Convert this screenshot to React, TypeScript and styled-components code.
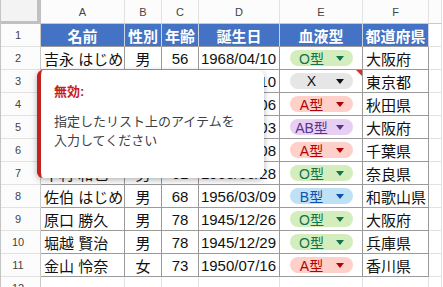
import React from 'react';
import { styled, createGlobalStyle } from 'styled-components';

type Blood = 'O' | 'A' | 'B' | 'AB' | 'X';

interface IRow {
  name: string;
  sex: string;
  age: number;
  birth: string;
  blood: Blood;
  pref: string;
  invalid?: boolean;
}

const GlobalStyle = createGlobalStyle`
  html, body {
    margin: 0;
    padding: 0;
    background: #ffffff;
    overflow: hidden;
  }
  body {
    font-family: "Liberation Sans", "Noto Sans CJK JP", sans-serif;
  }
`;

const CHIP: { [key in Blood]: { bg: string; fg: string; label: string } } = {
  O: { bg: '#d4edbc', fg: '#11734b', label: 'O型' },
  A: { bg: '#ffcfc9', fg: '#b10202', label: 'A型' },
  B: { bg: '#bfe1f6', fg: '#0a53a8', label: 'B型' },
  AB: { bg: '#e6cff2', fg: '#5a3286', label: 'AB型' },
  X: { bg: '#e6e6e6', fg: '#111111', label: 'X' },
};

const COLUMNS = ['A', 'B', 'C', 'D', 'E', 'F', ''];
const HEADERS = ['名前', '性別', '年齢', '誕生日', '血液型', '都道府県'];

const ROWS: IRow[] = [
  { name: '吉永 はじめ', sex: '男', age: 56, birth: '1968/04/10', blood: 'O', pref: '大阪府' },
  { name: '田中 一郎', sex: '男', age: 45, birth: '1979/02/10', blood: 'X', pref: '東京都', invalid: true },
  { name: '佐藤 花子', sex: '女', age: 38, birth: '1986/05/06', blood: 'A', pref: '秋田県' },
  { name: '鈴木 健太', sex: '男', age: 52, birth: '1972/11/03', blood: 'AB', pref: '大阪府' },
  { name: '山本 美咲', sex: '女', age: 29, birth: '1995/09/08', blood: 'A', pref: '千葉県' },
  { name: '中村 和也', sex: '男', age: 61, birth: '1963/06/28', blood: 'O', pref: '奈良県' },
  { name: '佐伯 はじめ', sex: '男', age: 68, birth: '1956/03/09', blood: 'B', pref: '和歌山県' },
  { name: '原口 勝久', sex: '男', age: 78, birth: '1945/12/26', blood: 'O', pref: '大阪府' },
  { name: '堀越 賢治', sex: '男', age: 78, birth: '1945/12/29', blood: 'O', pref: '兵庫県' },
  { name: '金山 怜奈', sex: '女', age: 73, birth: '1950/07/16', blood: 'A', pref: '香川県' },
];

const Page = styled.div`
  position: relative;
  width: 443px;
  height: 287px;
  overflow: hidden;
`;

const Sheet = styled.div`
  display: grid;
  grid-template-columns: 40px 84px 37px 37px 81px 83px 66px 13px;
  grid-template-rows: 24px;
  grid-auto-rows: 23px;
  border-left: 1px solid #c4c4c4;
  width: max-content;
`;

const Cell = styled.div<{ $data?: boolean }>`
  box-sizing: border-box;
  border-right: 1px solid ${(p) => (p.$data ? '#9b9b9b' : '#e2e2e2')};
  border-bottom: 1px solid ${(p) => (p.$data ? '#9b9b9b' : '#e2e2e2')};
  display: flex;
  align-items: center;
  font-size: 15px;
  color: #111111;
  white-space: nowrap;
  overflow: hidden;
  position: relative;
`;

const Corner = styled(Cell)`
  background: #f3f3f3;
  border-right: 4px solid #c0c0c0;
  border-bottom: 3px solid #c0c0c0;
`;

const ColHead = styled(Cell)`
  background: #fcfcfc;
  justify-content: center;
  font-size: 11px;
  color: #444444;
  border-bottom-color: #c9c9c9;
`;

const RowHead = styled(Cell)`
  background: #fcfcfc;
  justify-content: center;
  padding-right: 5px;
  font-size: 11px;
  color: #444444;
  border-right-color: #c9c9c9;
`;

const HeadCell = styled(Cell)`
  background: #4472c4;
  color: #ffffff;
  font-weight: bold;
  justify-content: center;
  border-right-color: #c9d3e6;
  border-bottom-color: #9b9b9b;
`;

const TextCell = styled(Cell)<{ $align?: 'left' | 'center' | 'right' }>`
  justify-content: ${(p) =>
    p.$align === 'center' ? 'center' : p.$align === 'right' ? 'flex-end' : 'flex-start'};
  padding: 0 3px;
`;

const ChipCell = styled(Cell)`
  padding-left: 10px;
`;

const Chip = styled.div<{ $bg: string; $fg: string }>`
  display: flex;
  align-items: center;
  width: 63px;
  height: 16px;
  border-radius: 8px;
  background: ${(p) => p.$bg};
  color: ${(p) => p.$fg};
  font-size: 14px;
`;

const ChipLabel = styled.span`
  flex: 1;
  text-align: center;
  padding-left: 1px;
`;

const ChipArrow = styled.span<{ $fg: string }>`
  width: 0;
  height: 0;
  margin-right: 9px;
  margin-left: 4px;
  border-left: 4px solid transparent;
  border-right: 4px solid transparent;
  border-top: 5px solid ${(p) => p.$fg};
`;

const InvalidMark = styled.span`
  position: absolute;
  top: 0;
  right: 0;
  width: 0;
  height: 0;
  border-left: 6px solid transparent;
  border-top: 6px solid #d93025;
`;

const Popup = styled.div`
  position: absolute;
  left: 37px;
  top: 70px;
  width: 227px;
  height: 108px;
  box-sizing: border-box;
  background: #ffffff;
  border-left: 4px solid #c5221f;
  border-radius: 6px;
  box-shadow: 0 2px 6px rgba(0, 0, 0, 0.3);
  padding: 13px 10px 0 13px;
`;

const PopupTitle = styled.div`
  font-size: 13px;
  line-height: 18px;
  font-weight: bold;
  color: #c5221f;
  margin-bottom: 11px;
`;

const PopupBody = styled.div`
  font-size: 13px;
  line-height: 19px;
  color: #3c4043;
`;

function BloodChip({ blood }: { blood: Blood }) {
  const c = CHIP[blood];
  return (
    <Chip $bg={c.bg} $fg={c.fg}>
      <ChipLabel>{c.label}</ChipLabel>
      <ChipArrow $fg={c.fg} />
    </Chip>
  );
}

export default function App() {
  return (
    <Page>
      <GlobalStyle />
      <Sheet>
        <Corner />
        {COLUMNS.map((col, i) => (
          <ColHead key={'c' + i}>{col}</ColHead>
        ))}

        <RowHead>1</RowHead>
        {HEADERS.map((h) => (
          <HeadCell key={h}>{h}</HeadCell>
        ))}
        <Cell />

        {ROWS.map((row, i) => (
          <React.Fragment key={i}>
            <RowHead>{i + 2}</RowHead>
            <TextCell $data>{row.name}</TextCell>
            <TextCell $data $align="center">
              {row.sex}
            </TextCell>
            <TextCell $data $align="center">
              {row.age}
            </TextCell>
            <TextCell $data $align="right">
              {row.birth}
            </TextCell>
            <ChipCell $data>
              <BloodChip blood={row.blood} />
              {row.invalid && <InvalidMark />}
            </ChipCell>
            <TextCell $data>{row.pref}</TextCell>
            <Cell />
          </React.Fragment>
        ))}

        <RowHead>12</RowHead>
        {COLUMNS.map((_, i) => (
          <Cell key={'e' + i} />
        ))}
      </Sheet>

      <Popup>
        <PopupTitle>無効:</PopupTitle>
        <PopupBody>
          指定したリスト上のアイテムを
          <br />
          入力してください
        </PopupBody>
      </Popup>
    </Page>
  );
}
